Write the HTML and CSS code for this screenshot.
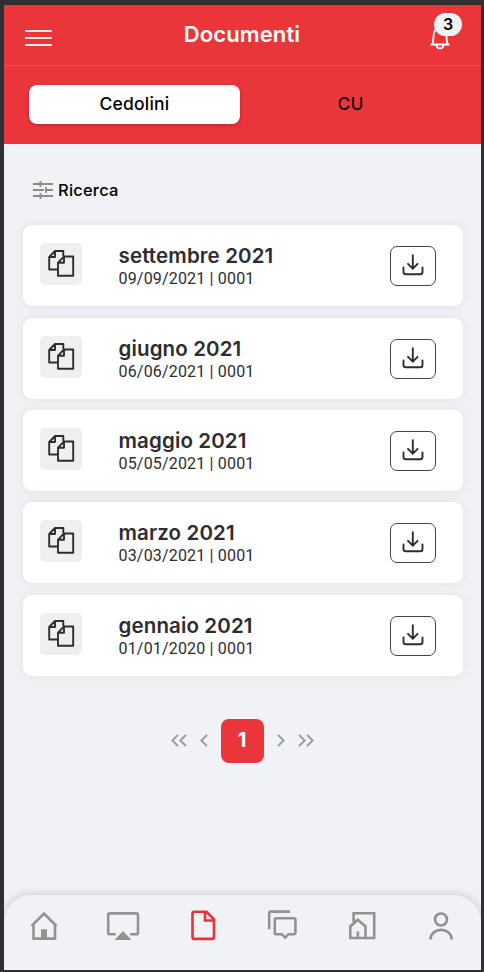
FILE: index.html
```
<!DOCTYPE html>
<html lang="it">
<head>
  <meta charset="UTF-8">
  <meta name="viewport" content="width=device-width, initial-scale=1.0">
  <title>Documenti</title>
  <link rel="stylesheet" href="styles.css">
</head>
<body>
  <svg class="symbols" width="0" height="0">
    <symbol id="icon-copy" viewBox="0 0 42 42">
      <path d="M17 26.5H9.2V14L15 8H23.3V13M15 8V14H9.2M18 19.7L24 13.5H33.2V32.8H18ZM24 13.5V19.7H18" />
    </symbol>
    <symbol id="icon-download" viewBox="0 0 46 40">
      <path d="M22.8 9.3V22.5M18 17.8L22.8 22.6L27.6 17.8M13.5 21.5V26Q13.5 28.3 15.8 28.3H30.2Q32.5 28.3 32.5 26V21.5" />
    </symbol>
  </svg>

  <div class="app">
    <header class="header">
      <div class="topbar">
        <button class="menu-btn" aria-label="Menu"><span></span><span></span><span></span></button>
        <h1>Documenti</h1>
        <button class="bell-btn" aria-label="Notifiche">
          <svg width="22" height="26" viewBox="0 0 22 26">
            <path d="M1.5 20.5H20.5M3.5 20.3C4.6 17 4.3 14 4.6 11C5 6.5 7.5 4 11 4S17 6.5 17.4 11C17.7 14 17.4 17 18.5 20.3M7.5 21.5C8 25.5 14 25.5 14.5 21.5" />
          </svg>
          <span class="badge">3</span>
        </button>
      </div>
      <div class="tabs">
        <button class="tab active">Cedolini</button>
        <button class="tab">CU</button>
      </div>
    </header>

    <main class="content">
      <div class="search">
        <svg width="20" height="18" viewBox="0 0 20 18">
          <path d="M0 3H20M0 9H11M13.5 9H20M0 15H20M7.5 0V6M13 6V12M7.5 12V18" />
        </svg>
        <span>Ricerca</span>
      </div>

      <div class="list">
        <div class="card">
          <svg class="doc-icon"><use href="#icon-copy" /></svg>
          <div class="info">
            <h2>settembre 2021</h2>
            <p>09/09/2021 | 0001</p>
          </div>
          <button class="download" aria-label="Scarica"><svg><use href="#icon-download" /></svg></button>
        </div>
        <div class="card">
          <svg class="doc-icon"><use href="#icon-copy" /></svg>
          <div class="info">
            <h2>giugno 2021</h2>
            <p>06/06/2021 | 0001</p>
          </div>
          <button class="download" aria-label="Scarica"><svg><use href="#icon-download" /></svg></button>
        </div>
        <div class="card">
          <svg class="doc-icon"><use href="#icon-copy" /></svg>
          <div class="info">
            <h2>maggio 2021</h2>
            <p>05/05/2021 | 0001</p>
          </div>
          <button class="download" aria-label="Scarica"><svg><use href="#icon-download" /></svg></button>
        </div>
        <div class="card">
          <svg class="doc-icon"><use href="#icon-copy" /></svg>
          <div class="info">
            <h2>marzo 2021</h2>
            <p>03/03/2021 | 0001</p>
          </div>
          <button class="download" aria-label="Scarica"><svg><use href="#icon-download" /></svg></button>
        </div>
        <div class="card">
          <svg class="doc-icon"><use href="#icon-copy" /></svg>
          <div class="info">
            <h2>gennaio 2021</h2>
            <p>01/01/2020 | 0001</p>
          </div>
          <button class="download" aria-label="Scarica"><svg><use href="#icon-download" /></svg></button>
        </div>
      </div>

      <div class="pagination">
        <svg width="16" height="13" viewBox="0 0 16 13"><path d="M7 .8L1.3 6.5L7 12.2M15 .8L9.3 6.5L15 12.2" /></svg>
        <svg width="8" height="13" viewBox="0 0 8 13"><path d="M7 .8L1.3 6.5L7 12.2" /></svg>
        <span class="page">1</span>
        <svg width="8" height="13" viewBox="0 0 8 13"><path d="M1 .8L6.7 6.5L1 12.2" /></svg>
        <svg width="16" height="13" viewBox="0 0 16 13"><path d="M1 .8L6.7 6.5L1 12.2M9 .8L14.7 6.5L9 12.2" /></svg>
      </div>
    </main>

    <nav class="navbar">
      <a><svg viewBox="0 0 36 36"><path d="M5.5 18L18 5.5L30.5 18M7.5 17V30.6H29V17" /><path class="fill" d="M15 21.3H21V31H15Z" /></svg></a>
      <a><svg viewBox="0 0 36 36"><path d="M10.8 26.2H5Q3.2 26.2 3.2 24.4V7.2Q3.2 5.4 5 5.4H31.2Q33 5.4 33 7.2V24.4Q33 26.2 31.2 26.2H25.2" /><path class="fill" d="M9.5 32L18 23L26.5 32Z" /></svg></a>
      <a class="active"><svg viewBox="0 0 36 36"><path d="M21.5 3.8H9.2Q7.5 3.8 7.5 5.5V29.2Q7.5 30.9 9.2 30.9H27.3Q29 30.9 29 29.2V11.3L21.5 3.8H20V12.5H29" /></svg></a>
      <a><svg viewBox="0 0 36 36"><path d="M5.2 21.3V5Q5.2 3.6 6.6 3.6H26M12.2 10.2H30Q31.4 10.2 31.4 11.6V24.8Q31.4 26.2 30 26.2H24.6L21.2 29.6L17.8 26.2H12.2Q10.8 26.2 10.8 24.8V11.6Q10.8 10.2 12.2 10.2Z" /></svg></a>
      <a><svg viewBox="0 0 36 36"><path d="M9.6 14V5.3H30.2V30H6.3V18.4L13.8 11.8L21.5 18.4V30M13.9 23.5V30" /></svg></a>
      <a><svg viewBox="0 0 36 36"><circle cx="18" cy="11.5" r="6" /><path d="M7.5 31.5C8 18.7 28.2 18.7 28.7 31.5" /></svg></a>
    </nav>
  </div>
</body>
</html>
```
FILE: styles.css
```
* {
  box-sizing: border-box;
}
body {
  margin: 0;
  height: 972px;
  padding: 5px 3px 2px 4px;
  background: #2f3033;
  color: #2d2d2f;
  font-family: Inter, "Liberation Sans", sans-serif;
}
button {
  border: none;
  padding: 0;
  background: none;
  color: inherit;
  font: inherit;
}
h1, h2, p {
  margin: 0;
}
svg {
  display: block;
  fill: none;
  stroke: currentColor;
}
.symbols {
  position: absolute;
}
.app {
  display: flex;
  flex-direction: column;
  height: 965px;
  background: #f1f2f6;
  overflow: hidden;
}
.header {
  height: 139px;
  background: #ea363a;
}
.topbar {
  display: flex;
  justify-content: space-between;
  height: 61px;
  padding: 0 30px 0 21px;
  border-bottom: 1px solid #f04f50;
}
.menu-btn {
  display: flex;
  flex-direction: column;
  gap: 5px;
  width: 27px;
  padding-top: 25px;
}
.menu-btn span {
  height: 2px;
  background: #ffe9e6;
}
h1 {
  padding: 15px 0 0 3px;
  color: #fff;
  font-size: 22px;
  font-weight: 600;
  letter-spacing: 0.1px;
  line-height: 28px;
}
.bell-btn {
  position: relative;
  width: 22px;
  height: 26px;
  margin-top: 19px;
  color: #fff;
}
.bell-btn svg {
  stroke-width: 1.8;
}
.badge {
  position: absolute;
  top: -11px;
  left: 5px;
  width: 28px;
  height: 23px;
  border-radius: 12px;
  background: #f1f2f6;
  color: #000;
  font-size: 16px;
  font-weight: 600;
  line-height: 23px;
  text-align: center;
}
.tabs {
  display: grid;
  grid-template-columns: 211px 211px;
  gap: 5px;
  padding: 19px 25px;
}
.tab {
  height: 39px;
  padding-bottom: 2px;
  border-radius: 8px;
  color: #111;
  font-size: 17.5px;
  font-weight: 500;
  letter-spacing: 0.2px;
}
.tab.active {
  background: #fff;
  color: #000;
  box-shadow: 0 1px 4px rgba(0, 0, 0, 0.25);
}
.content {
  flex: 1;
  padding: 0 18px 0 19px;
}
.search {
  display: flex;
  align-items: center;
  gap: 5px;
  height: 81.4px;
  padding: 10px 0 0 10px;
  color: #000;
  font-size: 16.5px;
  font-weight: 500;
  letter-spacing: 0.2px;
}
.search svg {
  color: #8b8b8d;
  stroke-width: 1.8;
}
.list {
  display: flex;
  flex-direction: column;
  gap: 11.3px;
}
.card {
  display: flex;
  align-items: flex-start;
  height: 81px;
  padding: 18px 27px 0 17px;
  border-radius: 9px;
  background: #fff;
  box-shadow: 0 0 10px rgba(80, 90, 90, 0.11);
}
.doc-icon {
  width: 42px;
  height: 42px;
  border-radius: 5px;
  background: #efefef;
  stroke-width: 1.9;
  stroke-linejoin: round;
}
.info {
  flex: 1;
  padding-left: 36.5px;
}
.info h2 {
  font-size: 20.5px;
  font-weight: 600;
  letter-spacing: 0.13px;
  line-height: 25px;
}
.info p {
  font-family: Roboto, sans-serif;
  font-size: 16px;
  letter-spacing: 0.18px;
  line-height: 21px;
}
.download {
  width: 46px;
  height: 40px;
  margin-top: 3px;
  border: 1px solid #444;
  border-radius: 7px;
}
.download svg {
  width: 46px;
  height: 40px;
  margin: -1px;
  stroke-width: 1.9;
  stroke-linecap: round;
}
.pagination {
  display: flex;
  justify-content: center;
  align-items: center;
  gap: 13px;
  margin: 43px 2px 0 0;
  color: #98999c;
}
.pagination svg {
  stroke-width: 1.9;
}
.page {
  width: 43px;
  height: 44px;
  border-radius: 8px;
  background: #ea363a;
  color: #fff;
  font-size: 20px;
  font-weight: 700;
  line-height: 43px;
  text-align: center;
}
.navbar {
  display: grid;
  grid-template-columns: repeat(6, 1fr);
  justify-items: center;
  height: 75px;
  padding-top: 13px;
  border-radius: 27px 27px 0 0;
  background: #f1f2f6;
  box-shadow: 0 -1px 9px rgba(0, 0, 0, 0.17);
  color: #929295;
}
.navbar svg {
  width: 36px;
  height: 36px;
  stroke-width: 2.6;
}
.navbar .active {
  color: #e73338;
}
.fill {
  fill: currentColor;
  stroke: none;
}
```
